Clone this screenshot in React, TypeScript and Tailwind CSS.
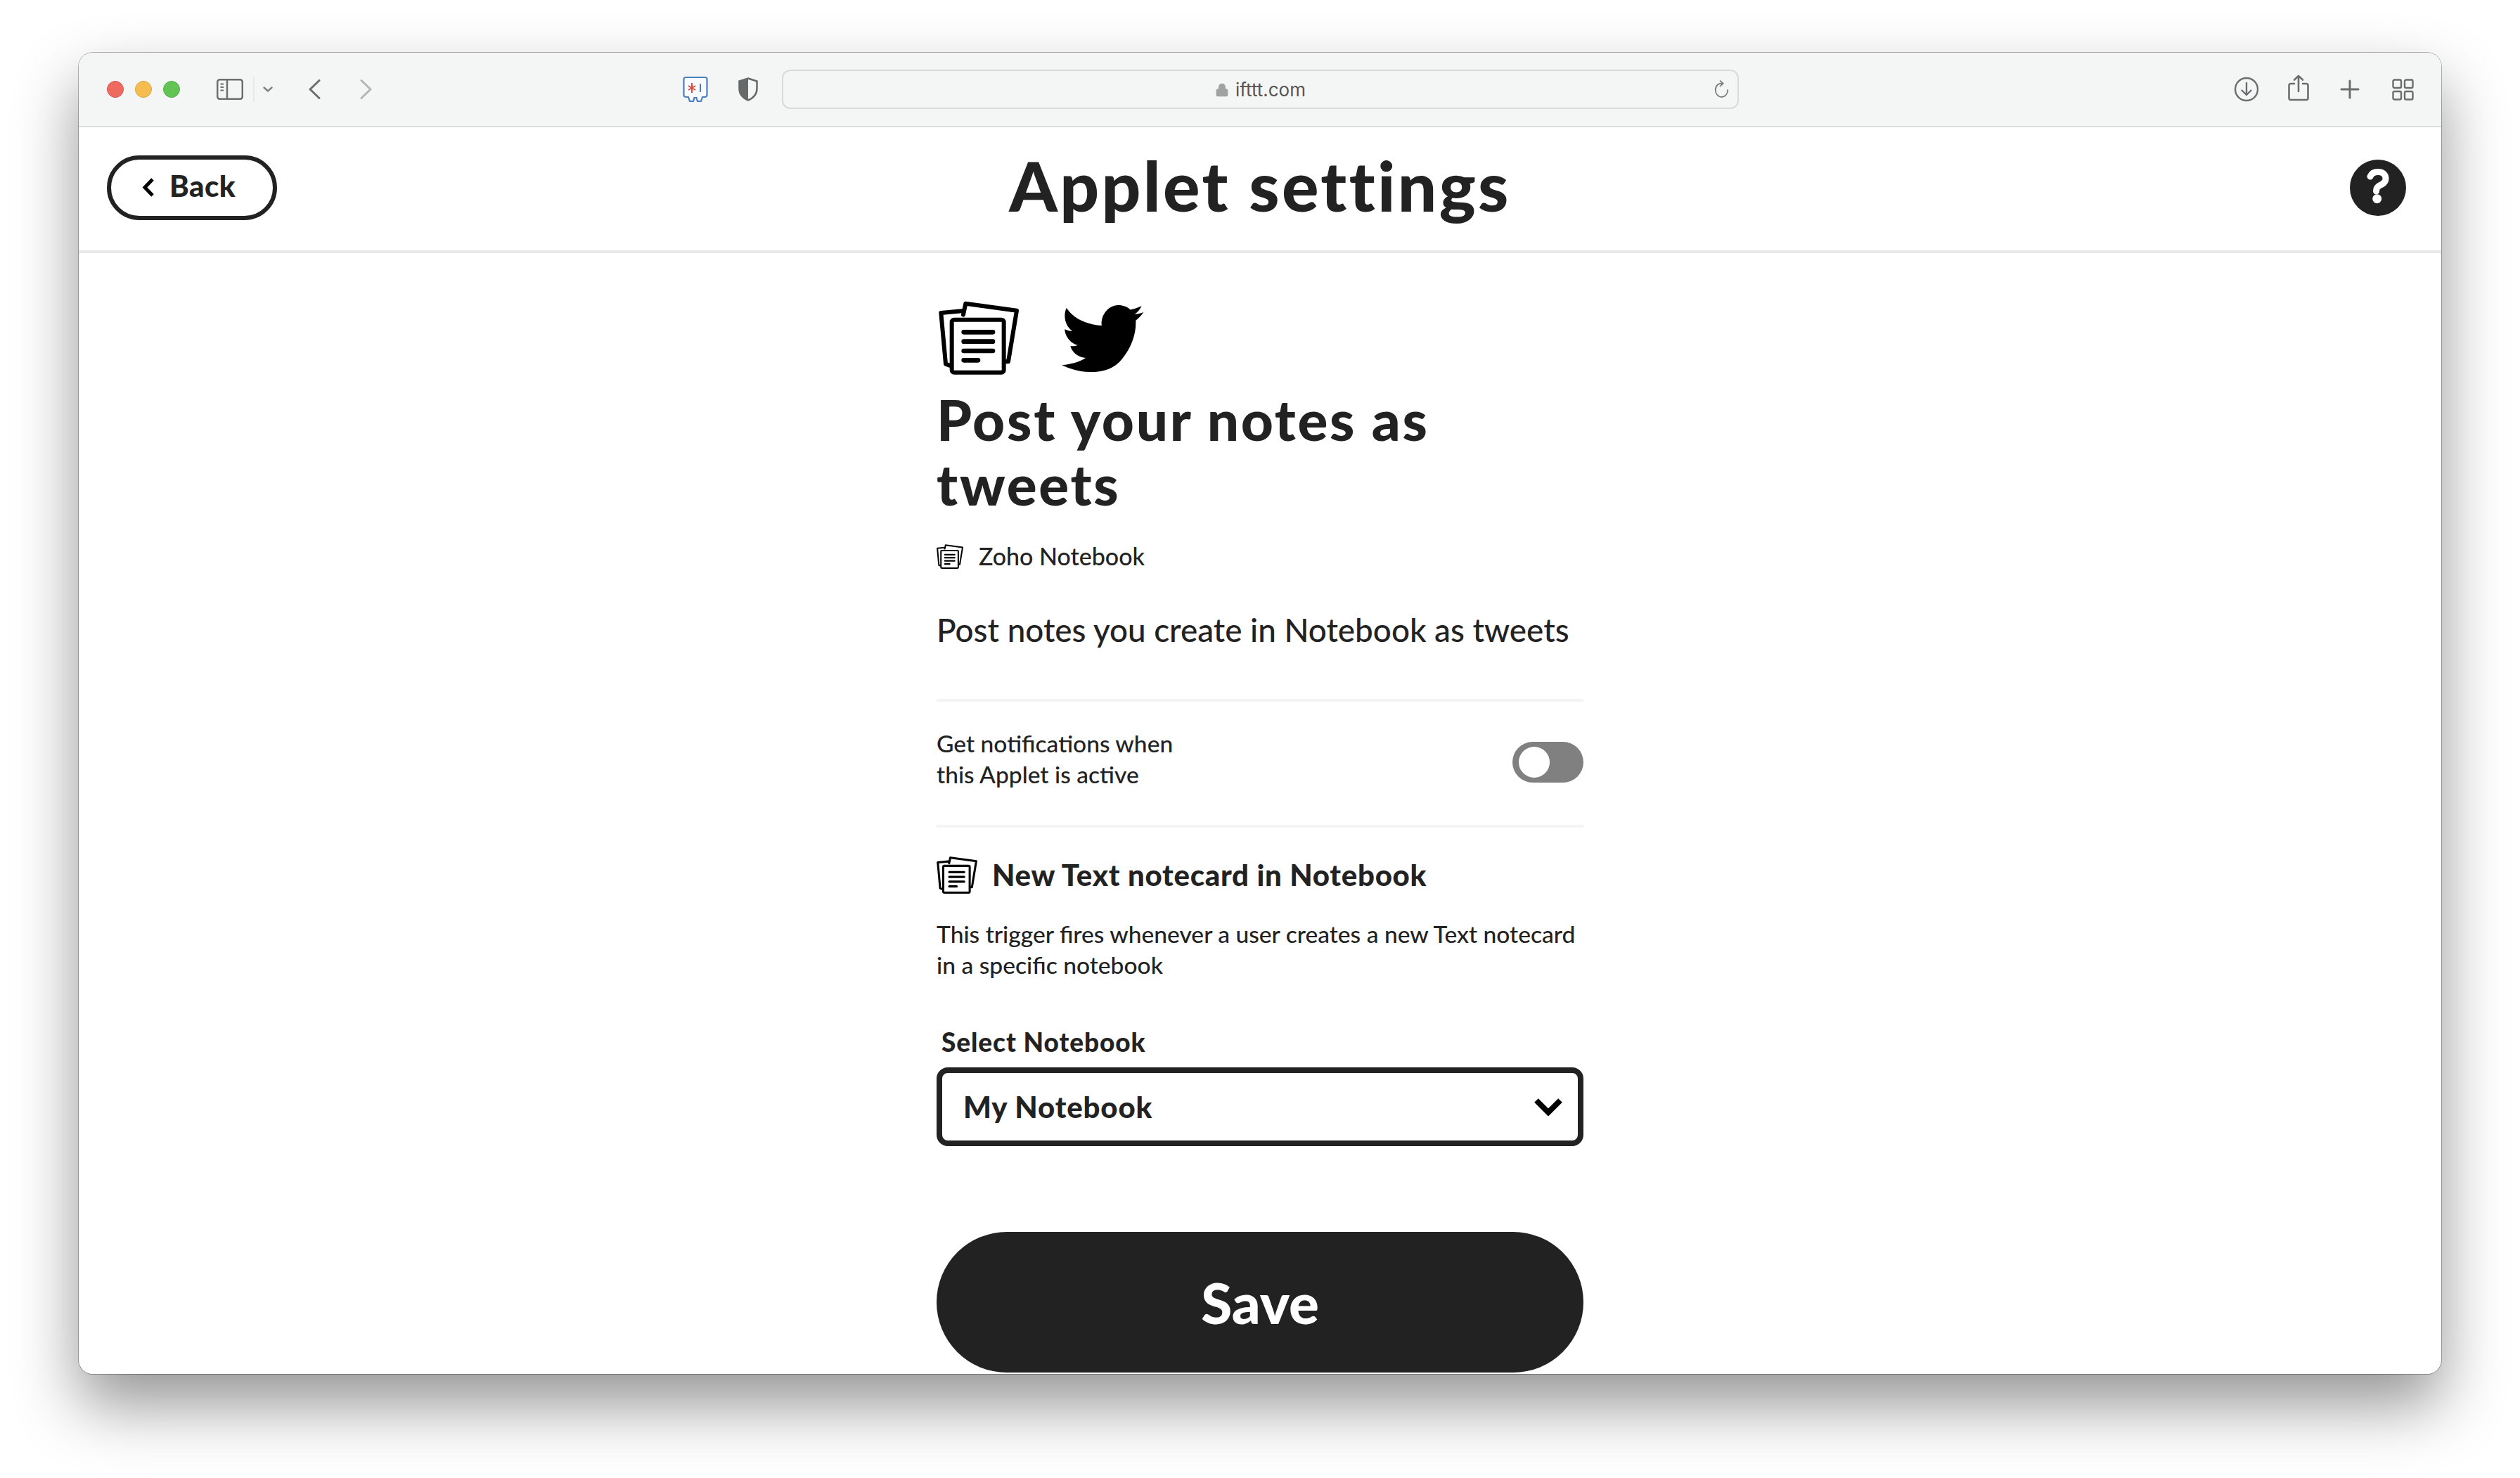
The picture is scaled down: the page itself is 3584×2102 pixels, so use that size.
import { Lock } from "lucide-react";

function NotebookIcon({ className }: { className: string }) {
  return (
    <svg viewBox="0 0 342 313" className={className} fill="none" stroke="#000" strokeLinecap="round" strokeLinejoin="round">
      <path d="M100 42 L10 50 L30 268 L46 274" strokeWidth="18" />
      <path d="M105 58 L115 10 L333 40 L297 258 L286 258" strokeWidth="18" />
      <rect x="56" y="79" width="222" height="225" rx="10" strokeWidth="18" fill="#fff" />
      <path d="M107 132H231M107 172H231M107 212H231M107 252H168" strokeWidth="20" />
    </svg>
  );
}

function TwitterBird() {
  return (
    <svg viewBox="0 0 350 290" className="w-[117px] h-[97px] ml-[61px] mt-[5px]" fill="#000">
      <path d="M20 15 C55 65 110 85 170 90 C165 55 190 5 240 3 C262 3 280 10 292 22 C310 20 325 13 340 7 C333 22 322 35 310 42 C325 41 336 37 348 33 C338 48 328 58 315 68 C318 130 292 195 245 245 C205 285 150 288 120 287 C80 287 35 275 0 257 C22 258 40 252 55 248 C75 242 90 235 102 227 C70 225 45 205 37 177 C47 178 58 178 68 173 C35 165 12 130 13 105 C22 110 35 113 45 113 C15 90 5 50 20 15 Z" />
    </svg>
  );
}

function ToolbarIcons() {
  const stroke = "#6b6e6e";
  return (
    <div className="flex items-center h-full pr-[39px]">
      <div className="flex gap-[16px] ml-[40px]">
        <span className="w-[24px] h-[24px] rounded-full bg-[#ee6a5f] border border-[#d5584f]" />
        <span className="w-[24px] h-[24px] rounded-full bg-[#f5bd4f] border border-[#d9a441]" />
        <span className="w-[24px] h-[24px] rounded-full bg-[#61c454] border border-[#56ad4a]" />
      </div>
      <svg viewBox="0 0 38 30" className="w-[38px] h-[30px] ml-[52px]" fill="none" stroke={stroke} strokeWidth="2.5">
        <rect x="1.2" y="1.2" width="35.6" height="27.6" rx="3.5" />
        <path d="M15 1.5V28.5" />
        <path d="M5.5 7.5H10M5.5 12H10M5.5 16.5H10" strokeWidth="2" />
      </svg>
      <div className="w-[2px] h-[36px] bg-[#e6e8e8] ml-[14px]" />
      <svg viewBox="0 0 14 8" className="w-[14px] h-[8px] ml-[12px]" fill="none" stroke="#808383" strokeWidth="2.4" strokeLinecap="round" strokeLinejoin="round">
        <path d="M1.5 1.5L7 6.5L12.5 1.5" />
      </svg>
      <svg viewBox="0 0 17 28" className="w-[17px] h-[28px] ml-[51px]" fill="none" stroke={stroke} strokeWidth="3" strokeLinecap="round" strokeLinejoin="round">
        <path d="M15 1.5L2 14L15 26.5" />
      </svg>
      <svg viewBox="0 0 17 28" className="w-[17px] h-[28px] ml-[56px]" fill="none" stroke="#b4b6b6" strokeWidth="3" strokeLinecap="round" strokeLinejoin="round">
        <path d="M2 1.5L15 14L2 26.5" />
      </svg>
      {/* Extension badge */}
      <svg viewBox="0 0 36 38" className="w-[36px] h-[38px] ml-[442px]" fill="none">
        <path d="M4 2H32C33.5 2 34.5 3 34.5 4.5V27C34.5 29 33 30 31 30H28L26 36H21L19.5 31H16.5L15 36H10L8 30H5C3 30 1.5 29 1.5 27V4.5C1.5 3 2.5 2 4 2Z" stroke="#4c7fc0" strokeWidth="2.2" fill="#fbfcfd" />
        <path d="M13 10V24M8 14L18 20M18 14L8 20" stroke="#df4a43" strokeWidth="2" />
        <path d="M25 11V23" stroke="#4c7fc0" strokeWidth="2" />
      </svg>
      <svg viewBox="0 0 28 34" className="w-[28px] h-[34px] ml-[43px]" fill="none">
        <path d="M14 1.5L26.5 5.5V16C26.5 24 21 29.5 14 32.5C7 29.5 1.5 24 1.5 16V5.5Z" stroke="#666969" strokeWidth="2.5" />
        <path d="M14 1.5L1.5 5.5V16C1.5 24 7 29.5 14 32.5Z" fill="#666969" />
      </svg>
      {/* Address bar */}
      <div className="relative w-[1361px] h-[56px] ml-[34px] flex items-center justify-center rounded-[12px] border-2 border-[#d9dbda] bg-[#f4f6f5]">
        <Lock className="w-[20px] h-[22px] mr-[9px] mt-[2px] text-[#a0a2a2]" fill="#a0a2a2" strokeWidth={2} />
        <span className="text-[26px] leading-none mt-[2px] text-[#555] font-['Inter',sans-serif]">ifttt.com</span>
        <svg viewBox="0 0 24 28" className="absolute right-[12px] top-[13px] w-[22px] h-[26px]" fill="none" stroke="#7c7f7f" strokeWidth="2" strokeLinecap="round" strokeLinejoin="round">
          <path d="M14 5C8 4 3 8.5 3 15C3 21 7.5 26 12.5 26C18 26 22 21 22 15" />
          <path d="M10.5 1L15 5L10.5 9" />
        </svg>
      </div>
      {/* Right side actions */}
      <div className="ml-auto flex items-center gap-[41px]">
        <svg viewBox="0 0 36 36" className="w-[36px] h-[36px]" fill="none" stroke={stroke} strokeWidth="2.4" strokeLinecap="round" strokeLinejoin="round">
          <circle cx="18" cy="18" r="16" />
          <path d="M18 9V26M11.5 19.5L18 26L24.5 19.5" />
        </svg>
        <svg viewBox="0 0 30 38" className="w-[30px] h-[38px] -mt-[4px]" fill="none" stroke={stroke} strokeWidth="2.6" strokeLinecap="round" strokeLinejoin="round">
          <path d="M9 13H4C2.5 13 1.5 14 1.5 15.5V33.5C1.5 35 2.5 36 4 36H26C27.5 36 28.5 35 28.5 33.5V15.5C28.5 14 27.5 13 26 13H21" />
          <path d="M15 24V2M9 7.5L15 2L21 7.5" />
        </svg>
        <svg viewBox="0 0 28 28" className="w-[28px] h-[28px] ml-[3px]" fill="none" stroke={stroke} strokeWidth="3" strokeLinecap="round">
          <path d="M14 2V26M2 14H26" />
        </svg>
        <svg viewBox="0 0 31 31" className="w-[31px] h-[31px] ml-[5px]" fill="none" stroke={stroke} strokeWidth="2.4">
          <rect x="1.5" y="1.5" width="11.5" height="11.5" rx="2" />
          <rect x="18" y="1.5" width="11.5" height="11.5" rx="2" />
          <rect x="1.5" y="18" width="11.5" height="11.5" rx="2" />
          <rect x="18" y="18" width="11.5" height="11.5" rx="2" />
        </svg>
      </div>
    </div>
  );
}

export default function App() {
  return (
    <div className="w-[3584px] h-[2102px] bg-white pt-[75px] pl-[112px] overflow-hidden font-['Lato',sans-serif] text-[#222]">
      <div className="w-[3360px] h-[1879px] rounded-[20px] bg-white flex flex-col overflow-hidden shadow-[0_0_0_1px_rgba(0,0,0,0.28),0_44px_90px_rgba(0,0,0,0.42)]">
        <header className="h-[106px] shrink-0 bg-[#f4f6f5] border-b-2 border-[#dcdddd]">
          <ToolbarIcons />
        </header>

        {/* Page header */}
        <div className="h-[179px] shrink-0 grid grid-cols-[1fr_auto_1fr] items-center border-b-4 border-[#e8e8e8] px-[50px]">
          <button className="w-[242px] h-[92px] -ml-[10px] rounded-full border-[6px] border-[#222] flex items-center pl-[44px] -mt-[4px]">
            <svg viewBox="0 0 17 27" className="w-[17px] h-[27px]" fill="none" stroke="#000" strokeWidth="5">
              <path d="M15 2L4 13.5L15 25" />
            </svg>
            <span className="ml-[22px] -mt-[6px] text-[42px] font-black tracking-[0.01em] leading-none">Back</span>
          </button>
          <h1 className="text-[98px] leading-none font-black tracking-[0.034em] -mt-[12px]">Applet settings</h1>
          <div className="justify-self-end w-[80px] h-[80px] rounded-full bg-[#222] -mt-[4px] flex items-center justify-center">
            <svg viewBox="0 0 80 80" className="w-[80px] h-[80px]" fill="none" stroke="#fff" strokeWidth="9" strokeLinecap="round">
              <path d="M29 24C31 19 36 17.5 40 17.5C46 17.5 51 20.5 51 27C51 33 46 35 42 37C38.5 38.8 37.5 41 37.5 45" />
              <circle cx="38.7" cy="55.7" r="6.5" fill="#fff" stroke="none" />
            </svg>
          </div>
        </div>

        {/* Applet form */}
        <main className="w-[920px] mx-auto flex flex-col">
          <div className="flex mt-[68px] h-[105px]">
            <NotebookIcon className="w-[114px] h-[105px] ml-[3px]" />
            <TwitterBird />
          </div>
          <h2 className="mt-[17px] text-[80px] leading-[92px] font-black tracking-[0.034em] w-[760px]">Post your notes as tweets</h2>
          <div className="flex items-center mt-[39px] h-[36px]">
            <NotebookIcon className="w-[38px] h-[35px]" />
            <span className="ml-[22px] text-[34px] leading-none font-medium">Zoho Notebook</span>
          </div>
          <p className="mt-[59px] text-[45.8px] leading-[56px] font-medium">Post notes you create in Notebook as tweets</p>

          <div className="mt-[70px] h-[4px] bg-[#f4f4f4]" />
          <div className="h-[175px] flex items-center justify-between">
            <p className="text-[33.6px] leading-[44px] w-[400px] font-medium -mt-[14px]">
              Get notifications when
              <br />
              this Applet is active
            </p>
            <div className="w-[101px] h-[58px] rounded-full bg-[#808080] flex items-center pl-[9px] -mt-[3px]">
              <span className="w-[44px] h-[44px] rounded-full bg-white" />
            </div>
          </div>
          <div className="h-[4px] bg-[#f4f4f4]" />

          <div className="flex items-center mt-[41px] h-[52px]">
            <NotebookIcon className="w-[58px] h-[53px]" />
            <h3 className="ml-[21px] text-[42px] leading-none font-black tracking-[0.017em]">New Text notecard in Notebook</h3>
          </div>
          <p className="mt-[36px] text-[33.6px] leading-[44px] font-medium">
            This trigger fires whenever a user creates a new Text notecard in a specific notebook
          </p>

          <label className="mt-[66px] ml-[7px] text-[37px] leading-[44px] font-black tracking-[0.025em]">Select Notebook</label>
          <div className="mt-[14px] h-[112px] rounded-[16px] border-[8px] border-[#222] flex items-center justify-between pl-[30px] pr-[22px]">
            <span className="text-[42px] leading-none font-black tracking-[0.02em]">My Notebook</span>
            <svg viewBox="0 0 40 26" className="w-[40px] h-[26px]" fill="none" stroke="#000" strokeWidth="8">
              <path d="M3 4L20 21L37 4" />
            </svg>
          </div>
          <button className="mt-[122px] h-[200px] rounded-full bg-[#222] text-white text-[80px] font-black leading-none">Save</button>
        </main>
      </div>
    </div>
  );
}
